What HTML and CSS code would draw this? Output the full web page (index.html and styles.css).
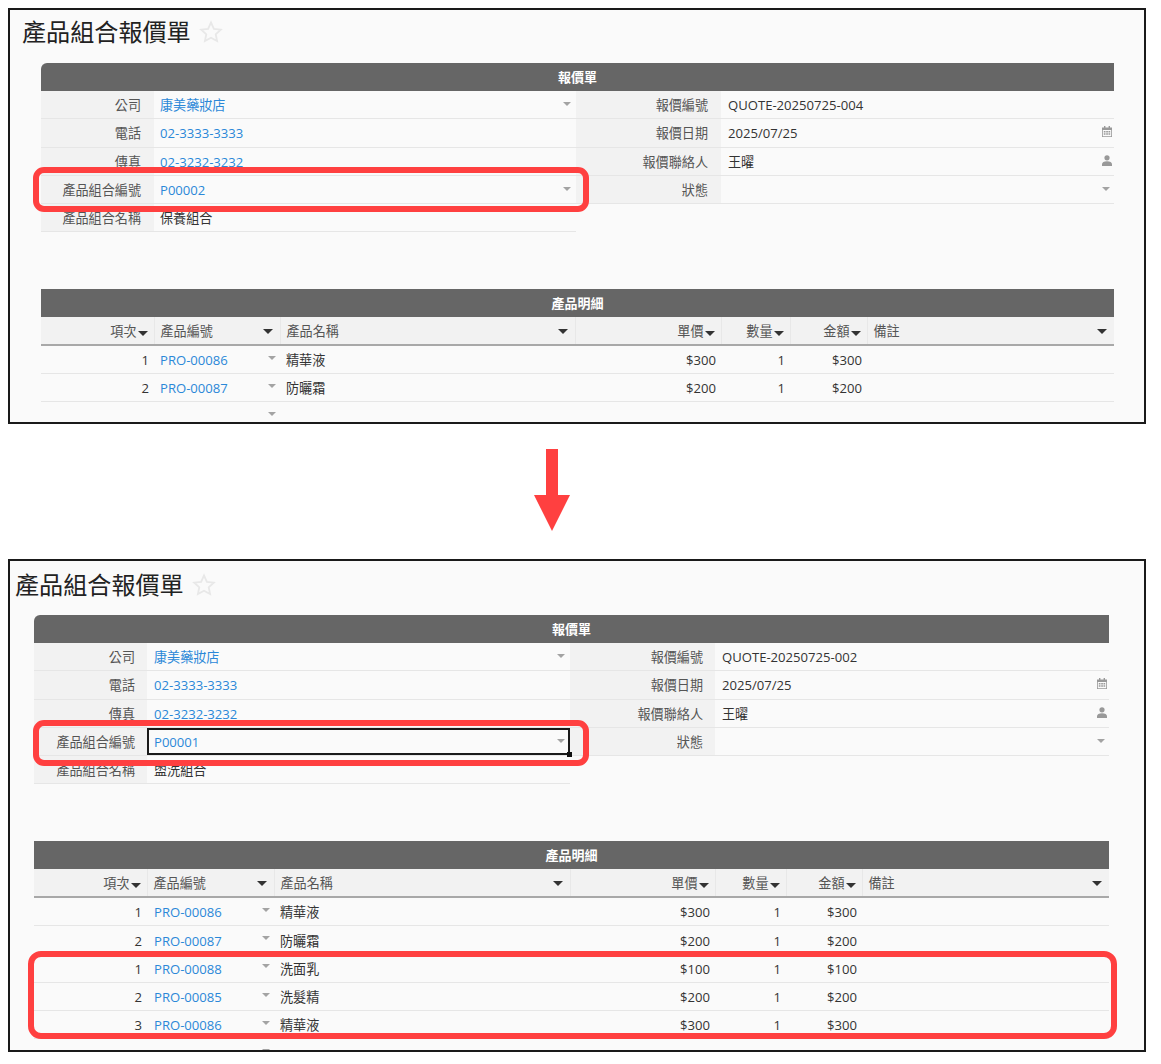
FILE: index.html
```html
<!DOCTYPE html>
<html lang="zh-Hant">
<head>
<meta charset="utf-8">
<title>產品組合報價單</title>
<link rel="stylesheet" href="styles.css">
</head>
<body>
<svg class="defs" width="0" height="0" aria-hidden="true">
  <symbol id="calendar" viewBox="0 0 10 11"><path d="M2 0h1.400v1.500h3.200V0H8v1.500h2V11H0V1.500h2zM.8 4v6.200h8.400V4zM1.800 5h1.700v1.400H1.800zm2.400 0h1.700v1.400H4.200zm2.300 0h1.700v1.400H6.500zM1.800 7.300h1.700v1.500H1.800zm2.400 0h1.700v1.500H4.200zm2.300 0h1.700v1.500H6.500z"/></symbol>
  <symbol id="person" viewBox="0 0 10 11"><circle cx="5" cy="2.800" r="2.600"/><path d="M0 11V9.300C0 7.400 2 6.300 5 6.300s5 1.100 5 3V11z"/></symbol>
  <symbol id="star" viewBox="0 0 24 24"><path d="M12 2.500l2.900 6.300 6.900.8-5.100 4.700 1.400 6.800-6.100-3.400-6.100 3.400 1.400-6.800-5.100-4.700 6.900-.8z"/></symbol>
</svg>

<section class="panel panel-a">
  <h1 class="title">產品組合報價單<svg class="star"><use href="#star"/></svg></h1>
  <h2 class="band band-round">報價單</h2>
  <div class="form">
    <div class="lbl">公司</div><div class="val link">康美藥妝店<i class="caret"></i></div>
    <div class="lbl">報價編號</div><div class="val right">QUOTE-20250725-004</div>
    <div class="lbl">電話</div><div class="val link">02-3333-3333</div>
    <div class="lbl">報價日期</div><div class="val right">2025/07/25<svg class="ico"><use href="#calendar"/></svg></div>
    <div class="lbl">傳真</div><div class="val link">02-3232-3232</div>
    <div class="lbl">報價聯絡人</div><div class="val right">王曜<svg class="ico"><use href="#person"/></svg></div>
    <div class="lbl">產品組合編號</div><div class="val link">P00002<i class="caret"></i></div>
    <div class="lbl">狀態</div><div class="val right"><i class="caret"></i></div>
    <div class="lbl">產品組合名稱</div><div class="val">保養組合</div>
  </div>
  <h2 class="band">產品明細</h2>
  <table class="grid">
    <colgroup><col class="c1"><col class="c2"><col class="c3"><col class="c4"><col class="c5"><col class="c6"><col class="c7"></colgroup>
    <thead><tr>
      <th class="r">項次<i class="sort"></i></th><th>產品編號<i class="sort end"></i></th><th>產品名稱<i class="sort end"></i></th>
      <th class="r">單價<i class="sort"></i></th><th class="r">數量<i class="sort"></i></th><th class="r">金額<i class="sort"></i></th><th>備註<i class="sort end"></i></th>
    </tr></thead>
    <tbody>
      <tr><td class="r">1</td><td class="link">PRO-00086<i class="caret"></i></td><td>精華液</td><td class="r">$300</td><td class="r">1</td><td class="r">$300</td><td></td></tr>
      <tr><td class="r">2</td><td class="link">PRO-00087<i class="caret"></i></td><td>防曬霜</td><td class="r">$200</td><td class="r">1</td><td class="r">$200</td><td></td></tr>
      <tr><td></td><td><i class="caret"></i></td><td></td><td></td><td></td><td></td><td></td></tr>
    </tbody>
  </table>
  <div class="mark mark-field"></div>
</section>

<div class="arrow-row">
  <svg class="arrow" viewBox="0 0 36 82" width="36" height="82"><path d="M12 0h12v46h12L18 82 0 46h12z"/></svg>
</div>

<section class="panel panel-b">
  <h1 class="title">產品組合報價單<svg class="star"><use href="#star"/></svg></h1>
  <h2 class="band band-round">報價單</h2>
  <div class="form">
    <div class="lbl">公司</div><div class="val link">康美藥妝店<i class="caret"></i></div>
    <div class="lbl">報價編號</div><div class="val right">QUOTE-20250725-002</div>
    <div class="lbl">電話</div><div class="val link">02-3333-3333</div>
    <div class="lbl">報價日期</div><div class="val right">2025/07/25<svg class="ico"><use href="#calendar"/></svg></div>
    <div class="lbl">傳真</div><div class="val link">02-3232-3232</div>
    <div class="lbl">報價聯絡人</div><div class="val right">王曜<svg class="ico"><use href="#person"/></svg></div>
    <div class="lbl">產品組合編號</div><div class="val link focus">P00001<i class="caret"></i><b class="handle"></b></div>
    <div class="lbl">狀態</div><div class="val right"><i class="caret"></i></div>
    <div class="lbl">產品組合名稱</div><div class="val">盥洗組合</div>
  </div>
  <h2 class="band">產品明細</h2>
  <table class="grid">
    <colgroup><col class="c1"><col class="c2"><col class="c3"><col class="c4"><col class="c5"><col class="c6"><col class="c7"></colgroup>
    <thead><tr>
      <th class="r">項次<i class="sort"></i></th><th>產品編號<i class="sort end"></i></th><th>產品名稱<i class="sort end"></i></th>
      <th class="r">單價<i class="sort"></i></th><th class="r">數量<i class="sort"></i></th><th class="r">金額<i class="sort"></i></th><th>備註<i class="sort end"></i></th>
    </tr></thead>
    <tbody>
      <tr><td class="r">1</td><td class="link">PRO-00086<i class="caret"></i></td><td>精華液</td><td class="r">$300</td><td class="r">1</td><td class="r">$300</td><td></td></tr>
      <tr><td class="r">2</td><td class="link">PRO-00087<i class="caret"></i></td><td>防曬霜</td><td class="r">$200</td><td class="r">1</td><td class="r">$200</td><td></td></tr>
      <tr><td class="r">1</td><td class="link">PRO-00088<i class="caret"></i></td><td>洗面乳</td><td class="r">$100</td><td class="r">1</td><td class="r">$100</td><td></td></tr>
      <tr><td class="r">2</td><td class="link">PRO-00085<i class="caret"></i></td><td>洗髮精</td><td class="r">$200</td><td class="r">1</td><td class="r">$200</td><td></td></tr>
      <tr><td class="r">3</td><td class="link">PRO-00086<i class="caret"></i></td><td>精華液</td><td class="r">$300</td><td class="r">1</td><td class="r">$300</td><td></td></tr>
      <tr><td></td><td><i class="caret"></i></td><td></td><td></td><td></td><td></td><td></td></tr>
    </tbody>
  </table>
  <div class="mark mark-field"></div>
  <div class="mark mark-rows"></div>
</section>
</body>
</html>
```
FILE: styles.css
```css
* { box-sizing: border-box; }
html, body { background: #fff; }
body {
  margin: 8px 0 0 8px;
  width: 1138px;
  font: 13.1px/20px "Open Sans", "Noto Sans CJK TC", sans-serif;
  color: #333;
}
.defs { position: absolute; }

.panel {
  position: relative;
  border: 2px solid #1a1a1a;
  background: #fafafa;
  overflow: hidden;
}
.panel-a { height: 416px; padding-left: 31px; padding-right: 30px; }
.panel-b { height: 493px; padding-left: 24px; padding-right: 35px; }

.title {
  display: flex;
  align-items: center;
  margin: 0 0 0 -19px;
  height: 53px;
  padding-bottom: 9px;
  font-size: 24.1px;
  font-weight: 400;
  line-height: 44px;
  color: #222;
}
.panel-b .title { height: 54px; padding-bottom: 7px; }
.star {
  width: 24px;
  height: 24px;
  margin-left: 8px;
  fill: none;
  stroke: #e8e8e8;
  stroke-width: 1.800;
}

.band {
  margin: 0;
  height: 28px;
  background: #666;
  color: #fff;
  font-size: 13px;
  font-weight: 700;
  line-height: 28px;
  text-align: center;
}
.band-round { border-top-left-radius: 6px; }

.form {
  display: grid;
  grid-template-rows: repeat(5, 28.25px);
  margin-bottom: 57px;
}
.panel-a .form { grid-template-columns: 113px 422px 145px 393px; }
.panel-b .form { grid-template-columns: 113px 423px 145px 394px; }
.lbl {
  background: #f2f2f2;
  border-bottom: 1px solid #e6e6e6;
  padding-right: 13px;
  text-align: right;
  line-height: 28px;
  color: #555;
}
.panel-b .lbl { padding-right: 12px; }
.val {
  position: relative;
  border-bottom: 1px solid #e6e6e6;
  padding-left: 6px;
  line-height: 28px;
  color: #333;
}
.panel-b .val, .val.right { padding-left: 7px; }
.val.link { color: #2b88d8; }
.focus { box-shadow: inset 0 0 0 2px #1a1a1a; z-index: 1; }
.handle {
  position: absolute;
  right: -2px;
  bottom: -2px;
  width: 5px;
  height: 5px;
  background: #111;
}
.caret {
  position: absolute;
  right: 5px;
  top: 11px;
  border-style: solid;
  border-width: 4px 4.500px 0;
  border-color: #a3a3a3 transparent transparent;
}
.val.right .caret { right: 4px; }
.ico {
  position: absolute;
  right: 2px;
  top: 7px;
  width: 10px;
  height: 11px;
  fill: #999;
}

.grid {
  table-layout: fixed;
  width: 100%;
  border-collapse: collapse;
}
.panel-a .c1 { width: 113px; }
.panel-a .c2 { width: 126px; }
.panel-a .c3 { width: 295px; }
.panel-a .c4 { width: 146px; }
.panel-a .c5 { width: 69px; }
.panel-a .c6 { width: 77px; }
.panel-b .c1 { width: 113px; }
.panel-b .c2 { width: 127px; }
.panel-b .c3 { width: 296px; }
.panel-b .c4 { width: 145px; }
.panel-b .c5 { width: 71px; }
.panel-b .c6 { width: 76px; }
.grid th {
  position: relative;
  height: 28px;
  padding: 0 6px;
  background: #f2f2f2;
  border-bottom: 2px solid #a8a8a8;
  border-right: 1px solid #e8e8e8;
  font-weight: 400;
  text-align: left;
  color: #555;
}
.grid th:last-child { border-right: 0; }
.grid th.r { padding-right: 6px; text-align: right; }
.grid td {
  position: relative;
  height: 28.25px;
  padding: 0 6px;
  border-bottom: 1px solid #e6e6e6;
  color: #333;
}
.panel-b .grid tbody tr:nth-child(n+2) td { padding-top: 2px; }
.grid td.link { color: #2b88d8; }
.panel-b .grid td.link { padding-left: 7px; }
.grid td.r { text-align: right; padding-right: 5px; }
.grid td .caret { right: 4px; top: 10px; }
.sort {
  display: inline-block;
  vertical-align: 0;
  margin-left: 1px;
  border-style: solid;
  border-width: 5px 5px 0;
  border-color: #333 transparent transparent;
}
.sort.end {
  position: absolute;
  margin: 0;
  right: 7px;
  top: 12px;
}

.arrow-row {
  display: flex;
  justify-content: center;
  padding: 25px 50px 29px 0;
  height: 135px;
}
.arrow { fill: #ff4040; }

.mark {
  position: absolute;
  border: 6px solid #ff4040;
  border-radius: 11px;
  pointer-events: none;
  z-index: 2;
}
.panel-a .mark-field { left: 23px; top: 157px; width: 556px; height: 45px; }
.panel-b .mark-field { left: 23px; top: 159px; width: 556px; height: 46px; }
.mark-rows { left: 18px; top: 390px; width: 1089px; height: 88px; border-radius: 13px; }
```
